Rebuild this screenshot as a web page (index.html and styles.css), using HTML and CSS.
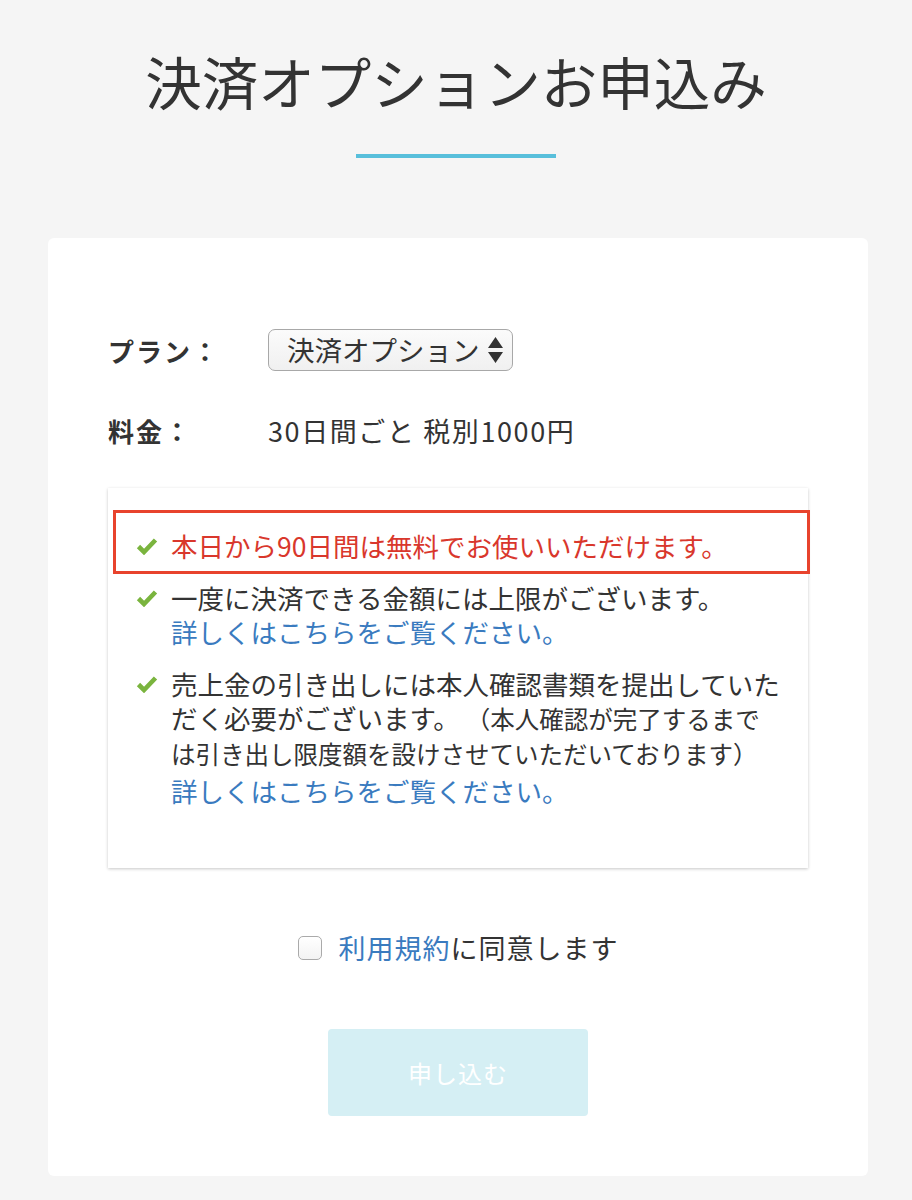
FILE: index.html
```html
<!DOCTYPE html>
<html lang="ja">
<head>
<meta charset="utf-8">
<title>決済オプションお申込み</title>
<link rel="stylesheet" href="styles.css">
</head>
<body>
<header class="page-head">
  <h1 class="page-title">決済オプションお申込み</h1>
  <div class="title-rule"></div>
</header>
<main class="card">
  <div class="form-row">
    <div class="form-label">プラン：</div>
    <div class="form-value">
      <div class="select">
        <span class="select-text">決済オプション</span>
        <svg class="select-arrows" width="17" height="27" viewBox="0 0 17 27"><path d="M8.5 0 L16 11 L1 11 Z M1 15 L16 15 L8.5 26 Z" fill="#333"/></svg>
      </div>
    </div>
  </div>
  <div class="form-row">
    <div class="form-label">料金：</div>
    <div class="form-value price">30日間ごと 税別1000円</div>
  </div>
  <section class="info-box">
    <ul class="info-list">
      <li class="info-item highlight">
        <svg class="check" width="22" height="18" viewBox="0 0 22 18"><path d="M2.5 9.5 L8 15 L19.5 3" fill="none" stroke="#7ab43e" stroke-width="4.6"/></svg>
        <div class="info-text red">本日から90日間は無料でお使いいただけます。</div>
      </li>
      <li class="info-item">
        <svg class="check" width="22" height="18" viewBox="0 0 22 18"><path d="M2.5 9.5 L8 15 L19.5 3" fill="none" stroke="#7ab43e" stroke-width="4.6"/></svg>
        <div class="info-text">一度に決済できる金額には上限がございます。<a class="link" href="#">詳しくはこちらをご覧ください。</a></div>
      </li>
      <li class="info-item">
        <svg class="check" width="22" height="18" viewBox="0 0 22 18"><path d="M2.5 9.5 L8 15 L19.5 3" fill="none" stroke="#7ab43e" stroke-width="4.6"/></svg>
        <div class="info-text">売上金の引き出しには本人確認書類を提出していただく必要がございます。 <span class="note">（本人確認が完了するまでは引き出し限度額を設けさせていただいております）</span><a class="link link-after-note" href="#">詳しくはこちらをご覧ください。</a></div>
      </li>
    </ul>
  </section>
  <div class="agree">
    <span class="checkbox"></span>
    <span class="agree-text"><a class="link" href="#">利用規約</a>に同意します</span>
  </div>
  <div class="actions">
    <button class="submit" type="button">申し込む</button>
  </div>
</main>
</body>
</html>
```

FILE: styles.css
```css
* { box-sizing: border-box; }
html, body { margin: 0; padding: 0; }
body {
  background: #f5f5f5;
  color: #333;
  font-family: "Noto Sans CJK JP", "Noto Sans", sans-serif;
}
.page-head {
  padding-top: 44px;
  text-align: center;
}
.page-title {
  margin: 0;
  font-size: 56.5px;
  font-weight: 400;
  line-height: 72px;
}
.title-rule {
  width: 200px;
  height: 4px;
  background: #58bfdb;
  margin: 38px auto 0;
}
.card {
  background: #fff;
  border-radius: 6px;
  margin: 80px 44px 0 48px;
  padding: 88px 60px 60px;
}
.form-row {
  display: grid;
  grid-template-columns: 160px 1fr;
  align-items: center;
  min-height: 48px;
}
.form-row + .form-row { margin-top: 32px; }
.form-label {
  font-size: 26px;
  font-weight: 700;
  letter-spacing: 2px;
}
.form-value { font-size: 26px; }
.price { font-size: 27px; letter-spacing: 1.6px; }
.select {
  display: inline-flex;
  align-items: center;
  justify-content: space-between;
  width: 245px;
  height: 42px;
  padding: 0 8px 0 18px;
  border: 1.5px solid #a8a8a8;
  border-radius: 7px;
  background: linear-gradient(#fbfbfb, #f0f0f0);
}
.select-text { font-size: 27.5px; line-height: 1; }
.select-arrows { display: block; }
.info-box {
  margin-top: 34px;
  background: #fff;
  box-shadow: 0 1px 3px rgba(0,0,0,0.22);
  padding: 41px 0 60px;
}
.info-list {
  list-style: none;
  margin: 0;
  padding: 0;
}
.info-item {
  display: flex;
  align-items: flex-start;
  gap: 13px;
  padding-left: 28px;
  padding-right: 25px;
  font-size: 26.5px;
  line-height: 34px;
}
.info-item + .info-item { margin-top: 18px; }
.check { flex: none; margin-top: 8px; }
.info-text { flex: 1; }
.note { font-size: 24.5px; }
.red { color: #d9372c; }
.highlight { position: relative; }
.highlight::before {
  content: "";
  position: absolute;
  left: 5px;
  right: 3px;
  top: -19px;
  bottom: -11px;
  border: 3px solid #e8432d;
  pointer-events: none;
}
.highlight::before { right: -2px; margin-right: 0; }
.highlight { margin-right: 0; }
.link { color: #3a7bbf; text-decoration: none; }
.info-text .link { display: block; }
.info-text .link-after-note { margin-top: 3px; }
.agree {
  display: flex;
  justify-content: center;
  align-items: center;
  gap: 17px;
  margin-top: 62px;
  font-size: 27px;
  line-height: 36px;
}
.checkbox {
  width: 24px;
  height: 24px;
  border: 1.5px solid #aaa;
  border-radius: 5px;
  background: linear-gradient(#fff, #f3f3f3);
}
.agree-text { letter-spacing: 1px; }
.actions {
  display: flex;
  justify-content: center;
  margin-top: 63px;
}
.submit {
  width: 260px;
  height: 87px;
  border: 0;
  border-radius: 4px;
  background: #d5eff4;
  color: #fff;
  font-family: inherit;
  font-size: 24px;
  letter-spacing: 1px;
}
```
